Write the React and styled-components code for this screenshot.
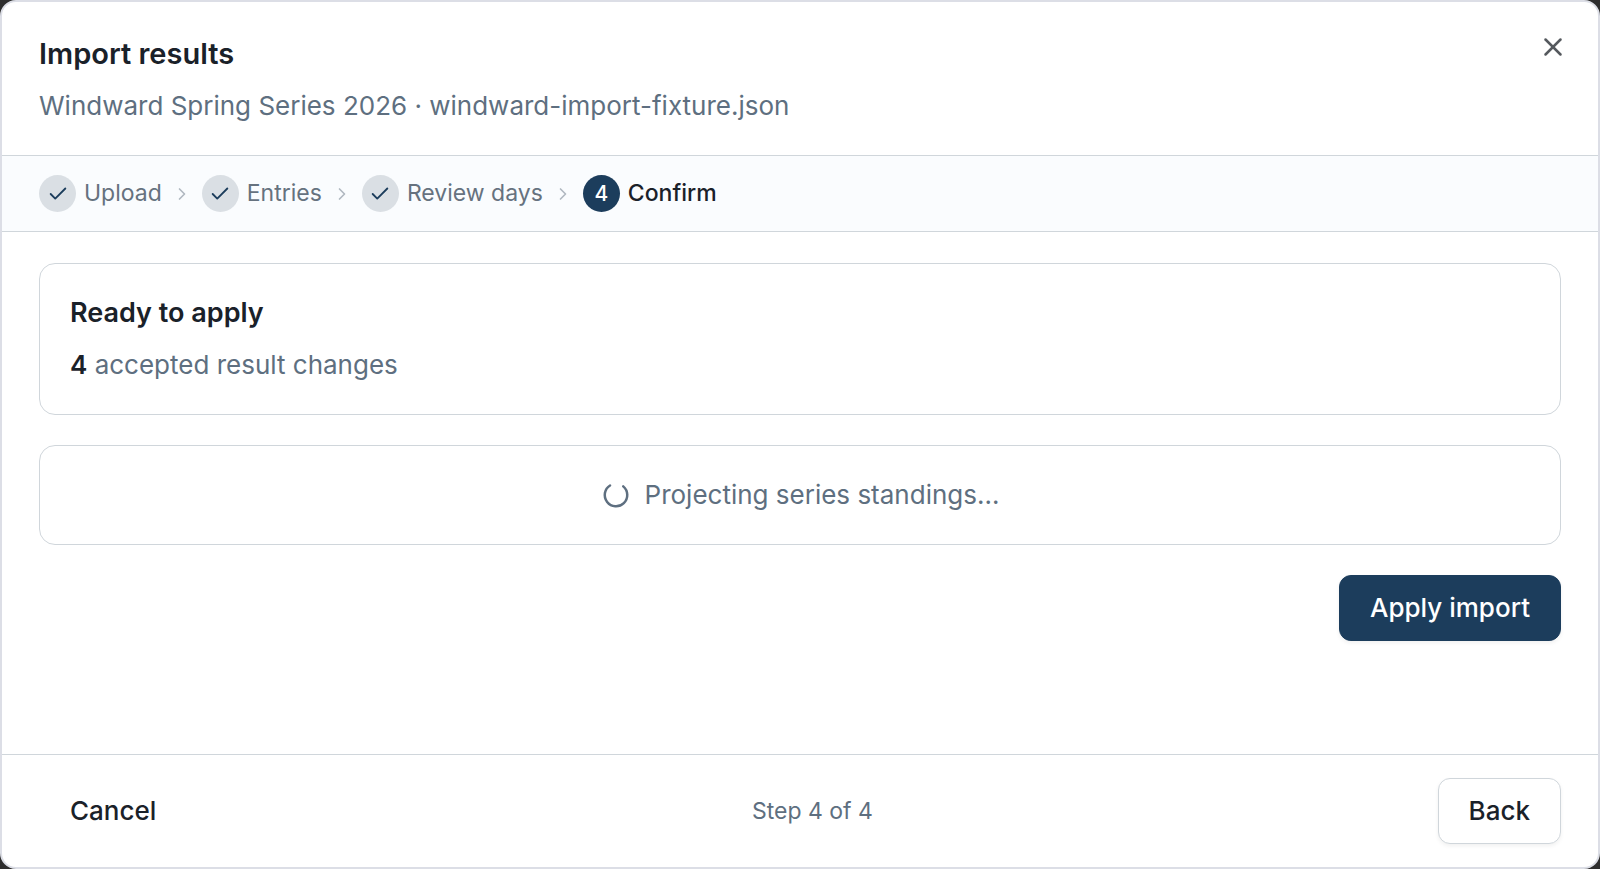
import React from "react";
import styled, { createGlobalStyle } from "styled-components";
import { Check, ChevronRight, LoaderCircle, X } from "lucide-react";

const Global = createGlobalStyle`
  *, *::before, *::after { box-sizing: border-box; }
  body { margin: 0; background: #2e2e2e; font-family: Inter, "Liberation Sans", sans-serif; color: #1a2129; }
  h1, h2, p, ol { margin: 0; padding: 0; }
  button { font: inherit; color: inherit; }
`;

const Dialog = styled.section`
  display: flex;
  flex-direction: column;
  min-height: 100vh;
  background: #fff;
  border: 2px solid #dcdee6;
  border-radius: 16px;
  overflow: hidden;
`;

const Header = styled.header`
  display: flex;
  justify-content: space-between;
  align-items: flex-start;
  padding: 30px 30px 29px 37px;
  border-bottom: 1px solid #d0d6db;
`;

const Title = styled.h1`
  font-size: 29px;
  line-height: 44px;
  font-weight: 600;
`;

const Subtitle = styled.p`
  margin-top: 10px;
  font-size: 26px;
  line-height: 40px;
  color: #5e6f80;
`;

const CloseButton = styled.button`
  display: flex;
  padding: 0;
  border: 0;
  background: none;
  color: #55595e;
`;

const Steps = styled.ol`
  display: flex;
  align-items: center;
  gap: 10px;
  padding: 19px 37px;
  list-style: none;
  background: #fafcfe;
  border-bottom: 1px solid #d0d6db;
`;

const Step = styled.li`
  display: flex;
  align-items: center;
  gap: 8px;
  font-size: 23px;
  line-height: 37px;
  font-weight: ${(p) => (p.$current ? 500 : 400)};
  color: ${(p) => (p.$current ? "#1a2129" : "#66727f")};
`;

const Badge = styled.span`
  display: flex;
  align-items: center;
  justify-content: center;
  width: 37px;
  height: 37px;
  border-radius: 50%;
  font-size: 21px;
  font-weight: 500;
  background: ${(p) => (p.$current ? "#1c3d5c" : "#dadfe4")};
  color: ${(p) => (p.$current ? "#fff" : "#1c3d5c")};
`;

const Separator = styled.li`
  display: flex;
  color: #b0b8c0;
`;

const Body = styled.main`
  flex: 1;
  display: flex;
  flex-direction: column;
  gap: 30px;
  padding: 31px 37px;
`;

const Card = styled.section`
  padding: 30px;
  border: 1px solid #d0d6db;
  border-radius: 16px;
`;

const CardTitle = styled.h2`
  font-size: 27px;
  line-height: 38px;
  font-weight: 600;
`;

const CardText = styled.p`
  margin-top: 14px;
  font-size: 26px;
  line-height: 38px;
  color: #5e6f80;
  strong { font-weight: 600; color: #1a2129; }
`;

const Loading = styled(Card)`
  display: flex;
  align-items: center;
  justify-content: center;
  gap: 14px;
  font-size: 26px;
  line-height: 38px;
  color: #5e6f80;
`;

const Spinner = styled(LoaderCircle)`
  transform: rotate(-50deg);
`;

const Button = styled.button`
  padding: 13px 30px;
  font-size: 26px;
  line-height: 38px;
  font-weight: 500;
  border: 1px solid ${(p) => (p.$variant === "primary" ? "#1c3d5c" : p.$variant === "outline" ? "#d0d6db" : "transparent")};
  border-radius: 12px;
  background: ${(p) => (p.$variant === "primary" ? "#1c3d5c" : "#fff")};
  color: ${(p) => (p.$variant === "primary" ? "#fff" : "#1a2129")};
  box-shadow: ${(p) => (p.$variant === "ghost" ? "none" : "0 2px 4px rgba(0, 0, 0, 0.06)")};
`;

const Actions = styled.div`
  display: flex;
  justify-content: flex-end;
`;

const Footer = styled.footer`
  display: flex;
  align-items: center;
  justify-content: space-between;
  padding: 23px 37px;
  border-top: 1px solid #d0d6db;
`;

const StepCount = styled.span`
  font-size: 23px;
  line-height: 38px;
  color: #5e6f80;
`;

const doneSteps = ["Upload", "Entries", "Review days"];

export default function App() {
  return (
    <>
      <Global />
      <Dialog role="dialog" aria-labelledby="dialog-title">
        <Header>
          <div>
            <Title id="dialog-title">Import results</Title>
            <Subtitle>Windward Spring Series 2026 · windward-import-fixture.json</Subtitle>
          </div>
          <CloseButton type="button" aria-label="Close">
            <X size={30} />
          </CloseButton>
        </Header>
        <Steps>
          {doneSteps.map((name) => (
            <React.Fragment key={name}>
              <Step>
                <Badge><Check size={22} /></Badge>
                {name}
              </Step>
              <Separator aria-hidden="true"><ChevronRight size={20} /></Separator>
            </React.Fragment>
          ))}
          <Step $current aria-current="step">
            <Badge $current>4</Badge>
            Confirm
          </Step>
        </Steps>
        <Body>
          <Card>
            <CardTitle>Ready to apply</CardTitle>
            <CardText><strong>4</strong> accepted result changes</CardText>
          </Card>
          <Loading role="status">
            <Spinner size={30} />
            Projecting series standings…
          </Loading>
          <Actions>
            <Button type="button" $variant="primary">Apply import</Button>
          </Actions>
        </Body>
        <Footer>
          <Button type="button" $variant="ghost">Cancel</Button>
          <StepCount>Step 4 of 4</StepCount>
          <Button type="button" $variant="outline">Back</Button>
        </Footer>
      </Dialog>
    </>
  );
}
